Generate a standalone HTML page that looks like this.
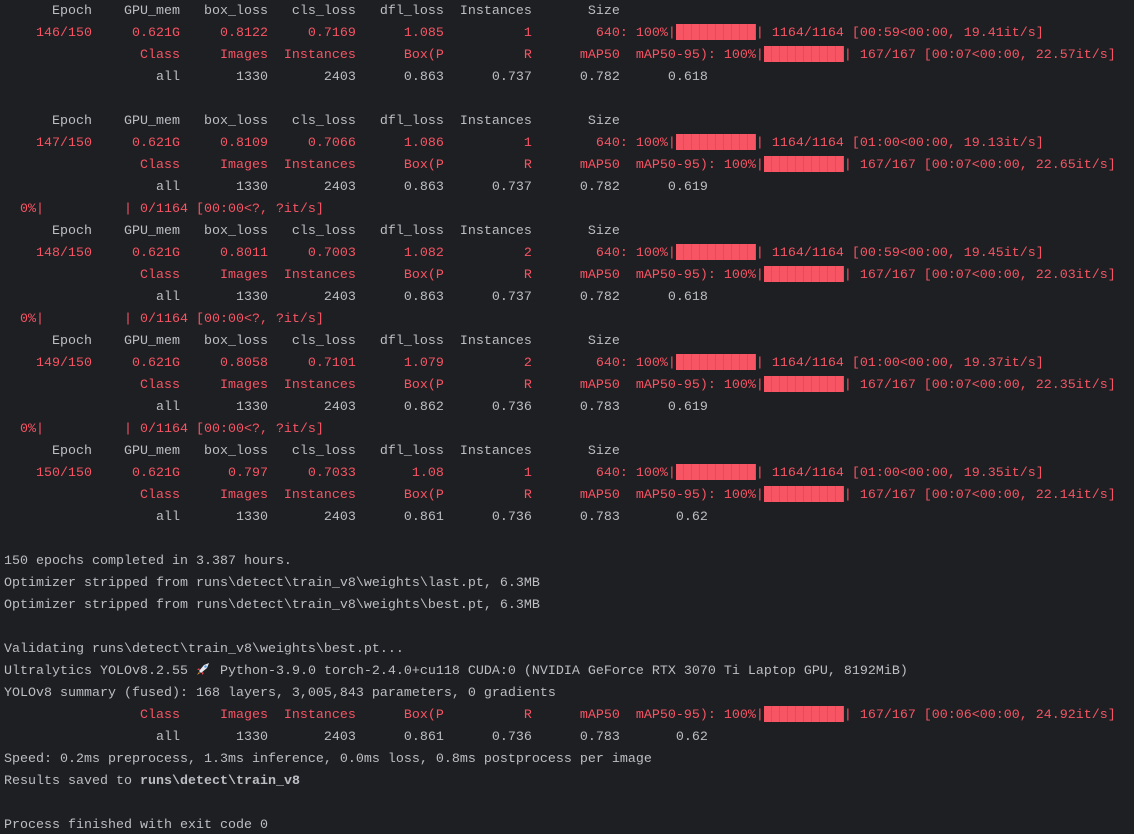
<!DOCTYPE html>
<html><head><meta charset="utf-8"><style>
html,body{margin:0;padding:0;background:#1e1f22;width:1134px;height:834px;overflow:hidden}
pre{margin:0;padding:1px 0 0 4px;font-family:"Liberation Mono","DejaVu Sans Mono",monospace;font-size:13.33px;line-height:22px;color:#bcbec4;white-space:pre}
.r{color:#f75464}
.b{display:inline-block;width:80px;height:16px;vertical-align:-4px;background:repeating-linear-gradient(90deg,#f75464 0,#f75464 7px,#e04d5c 7px,#e04d5c 8px)}
.k{display:inline-block;width:16px;height:14px;vertical-align:-2px}
b{font-weight:bold}
</style></head><body><pre>      Epoch    GPU_mem   box_loss   cls_loss   dfl_loss  Instances       Size
<span class="r">    146/150     0.621G     0.8122     0.7169      1.085          1        640: 100%|<span class="b"></span>| 1164/1164 [00:59&lt;00:00, 19.41it/s]</span>
<span class="r">                 Class     Images  Instances      Box(P          R      mAP50  mAP50-95): 100%|<span class="b"></span>| 167/167 [00:07&lt;00:00, 22.57it/s]</span>
                   all       1330       2403      0.863      0.737      0.782      0.618

      Epoch    GPU_mem   box_loss   cls_loss   dfl_loss  Instances       Size
<span class="r">    147/150     0.621G     0.8109     0.7066      1.086          1        640: 100%|<span class="b"></span>| 1164/1164 [01:00&lt;00:00, 19.13it/s]</span>
<span class="r">                 Class     Images  Instances      Box(P          R      mAP50  mAP50-95): 100%|<span class="b"></span>| 167/167 [00:07&lt;00:00, 22.65it/s]</span>
                   all       1330       2403      0.863      0.737      0.782      0.619
<span class="r">  0%|          | 0/1164 [00:00&lt;?, ?it/s]</span>
      Epoch    GPU_mem   box_loss   cls_loss   dfl_loss  Instances       Size
<span class="r">    148/150     0.621G     0.8011     0.7003      1.082          2        640: 100%|<span class="b"></span>| 1164/1164 [00:59&lt;00:00, 19.45it/s]</span>
<span class="r">                 Class     Images  Instances      Box(P          R      mAP50  mAP50-95): 100%|<span class="b"></span>| 167/167 [00:07&lt;00:00, 22.03it/s]</span>
                   all       1330       2403      0.863      0.737      0.782      0.618
<span class="r">  0%|          | 0/1164 [00:00&lt;?, ?it/s]</span>
      Epoch    GPU_mem   box_loss   cls_loss   dfl_loss  Instances       Size
<span class="r">    149/150     0.621G     0.8058     0.7101      1.079          2        640: 100%|<span class="b"></span>| 1164/1164 [01:00&lt;00:00, 19.37it/s]</span>
<span class="r">                 Class     Images  Instances      Box(P          R      mAP50  mAP50-95): 100%|<span class="b"></span>| 167/167 [00:07&lt;00:00, 22.35it/s]</span>
                   all       1330       2403      0.862      0.736      0.783      0.619
<span class="r">  0%|          | 0/1164 [00:00&lt;?, ?it/s]</span>
      Epoch    GPU_mem   box_loss   cls_loss   dfl_loss  Instances       Size
<span class="r">    150/150     0.621G      0.797     0.7033       1.08          1        640: 100%|<span class="b"></span>| 1164/1164 [01:00&lt;00:00, 19.35it/s]</span>
<span class="r">                 Class     Images  Instances      Box(P          R      mAP50  mAP50-95): 100%|<span class="b"></span>| 167/167 [00:07&lt;00:00, 22.14it/s]</span>
                   all       1330       2403      0.861      0.736      0.783       0.62

150 epochs completed in 3.387 hours.
Optimizer stripped from runs\detect\train_v8\weights\last.pt, 6.3MB
Optimizer stripped from runs\detect\train_v8\weights\best.pt, 6.3MB

Validating runs\detect\train_v8\weights\best.pt...
Ultralytics YOLOv8.2.55 <svg class="k" viewBox="0 0 16 14"><path d="M13 1 L8 3 L3 9 L5 11 L11 6 Z" fill="#e8e8ee"/><circle cx="9.5" cy="4.5" r="1.3" fill="#5aa0e0"/><path d="M4 8 L1 8 L3 6 Z M6 10 L6 13 L8 11 Z" fill="#e0404f"/><path d="M3 10 L1 13 L4 11 Z" fill="#f7a030"/></svg> Python-3.9.0 torch-2.4.0+cu118 CUDA:0 (NVIDIA GeForce RTX 3070 Ti Laptop GPU, 8192MiB)
YOLOv8 summary (fused): 168 layers, 3,005,843 parameters, 0 gradients
<span class="r">                 Class     Images  Instances      Box(P          R      mAP50  mAP50-95): 100%|<span class="b"></span>| 167/167 [00:06&lt;00:00, 24.92it/s]</span>
                   all       1330       2403      0.861      0.736      0.783       0.62
Speed: 0.2ms preprocess, 1.3ms inference, 0.0ms loss, 0.8ms postprocess per image
Results saved to <b>runs\detect\train_v8</b>

Process finished with exit code 0</pre></body></html>
